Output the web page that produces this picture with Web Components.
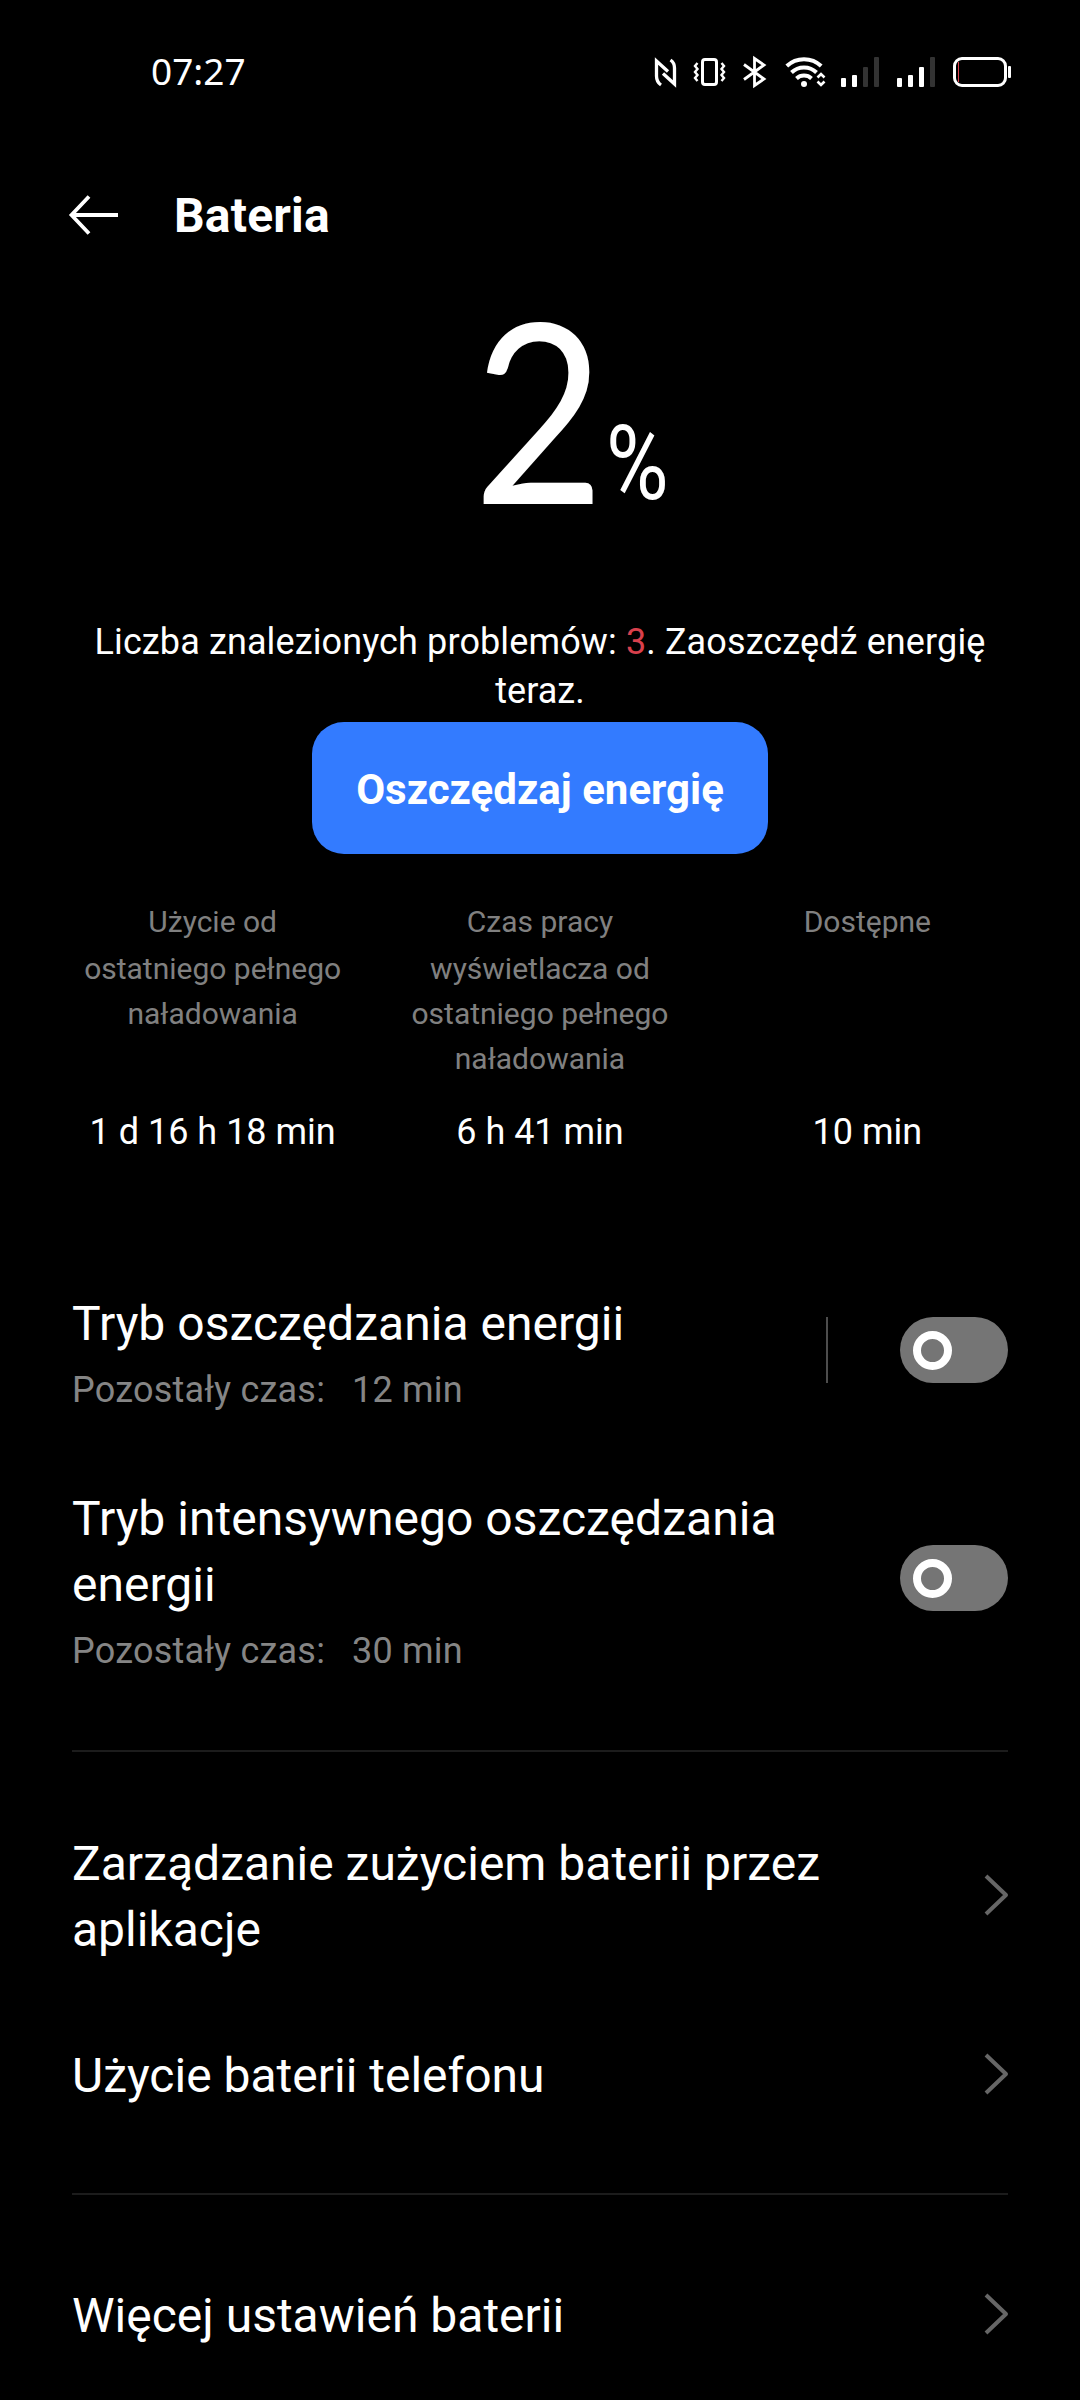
<!DOCTYPE html>
<html lang="pl">
<head>
<meta charset="utf-8">
<title>Bateria</title>
<style>
    body{
        margin: 0;
        background: #000;
        color: #fff;
        font-family: Roboto, "Noto Sans", sans-serif;
    }
</style>
</head>
<body>
<battery-page></battery-page>

<script>
class StatusBar extends HTMLElement{
    constructor(){
        super();
        this.attachShadow({mode:'open'});
    }

    connectedCallback(){
        this.shadowRoot.innerHTML = `
        <style>
            :host{
                display: flex;
                justify-content: space-between;
                height: 144px;
                padding: 0 60px 0 151px;
                box-sizing: border-box;
            }
            .time{
                font: 37px/44px "Noto Sans", sans-serif;
                padding-top: 49px;
            }
            svg{
                display: block;
                margin-top: 40px;
            }
        </style>
        <div class="time"><slot></slot></div>
        <svg width="380" height="64" viewBox="640 40 380 64" fill="none" stroke="#fff" stroke-width="3">
            <!-- nfc -->
            <path stroke-width="3.300" d="M661 85c-3-2-4.500-5-4.500-9V61L668 71.500M670.500 60c3 2 4 4.500 4 8V84L663 73.500"/>
            <!-- vibrate -->
            <rect x="702.500" y="59.500" width="14" height="25" rx="2.500"/>
            <path stroke-width="2.400" d="M697.500 63l-2.500 3 2.500 3-2.500 3 2.500 3-2.500 3 2.500 3M721.500 63l2.500 3-2.500 3 2.500 3-2.500 3 2.500 3-2.500 3"/>
            <!-- bluetooth -->
            <path stroke-width="2.800" d="M744 64.500L764 79l-9.500 6.500V58.500L764 65 744 79.500"/>
            <!-- wifi -->
            <path stroke-width="4" d="M786.800 66a25 25 0 0 1 34.400 0M791.500 72.500a18 18 0 0 1 25 0M796.500 78.500a11 11 0 0 1 15 0"/>
            <circle cx="804" cy="84" r="3" fill="#fff" stroke="none"/>
            <path stroke-width="2.600" d="M817.500 77.500l3.500-3.500 3.500 3.500M817.500 81.500l3.500 3.500 3.500-3.500"/>
            <!-- signal -->
            <g fill="#fff" stroke="none">
                <rect x="841" y="78" width="5" height="9" rx="1"/>
                <rect x="852" y="75" width="5" height="12" rx="1"/>
                <rect x="863" y="67" width="5" height="20" rx="1" fill="#333"/>
                <rect x="874" y="57" width="5" height="30" rx="1" fill="#333"/>
                <rect x="897" y="78" width="5" height="9" rx="1"/>
                <rect x="908" y="75" width="5" height="12" rx="1"/>
                <rect x="919" y="67" width="5" height="20" rx="1"/>
                <rect x="930" y="57" width="5" height="30" rx="1" fill="#333"/>
                <rect x="1008" y="66" width="3" height="12" rx="1"/>
                <rect x="958" y="62" width="1" height="20" fill="#d9404c"/>
            </g>
            <rect x="954.500" y="58.500" width="51" height="27" rx="7.500"/>
        </svg>
        `
    }
}

class PageHeader extends HTMLElement{
    constructor(){
        super();
        this.attachShadow({mode:'open'});
    }

    connectedCallback(){
        this.shadowRoot.innerHTML = `
        <style>
            :host{
                display: flex;
                align-items: center;
                height: 142px;
                padding-left: 67px;
                gap: 55px;
            }
            h1{
                margin: 0;
                padding-top: 2px;
                font-size: 48px;
                line-height: 60px;
                font-weight: 700;
                letter-spacing: .2px;
            }
            svg{
                display: block;
            }
        </style>
        <svg width="52" height="44" viewBox="0 0 52 44" fill="none" stroke="#fff" stroke-width="3.800">
            <path d="M22 3.500L4.500 22 22 40.500M4 22h47"/>
        </svg>
        <h1><slot></slot></h1>
        `
    }
}

class BatteryLevel extends HTMLElement{
    constructor(){
        super();
        this.attachShadow({mode:'open'});
    }

    connectedCallback(){
        this.shadowRoot.innerHTML = `
        <style>
            :host{
                display: flex;
                align-items: flex-start;
                height: 326px;
                padding-left: 473px;
            }
            .number{
                margin-top: -4px;
                font: 250px/250px Lato, sans-serif;
                width: 133px;
                transform: scaleX(.91);
                transform-origin: left;
            }
            .unit{
                padding-top: 118px;
                font-size: 103px;
                line-height: 120px;
                transform: scaleX(.83);
                transform-origin: left;
            }
        </style>
        <div class="number"><slot></slot></div>
        <div class="unit">%</div>
        `
    }
}

class MainButton extends HTMLElement{
    constructor(){
        super();
        this.attachShadow({mode:'open'});
    }

    connectedCallback(){
        this.shadowRoot.innerHTML = `
        <style>
            :host{
                display: block;
            }
            button{
                display: block;
                width: 456px;
                height: 132px;
                margin: 0 auto;
                padding: 3px 0 0;
                border: 0;
                border-radius: 32px;
                background: #337bff;
                color: #fff;
                font: 700 42px/50px Roboto, sans-serif;
                white-space: nowrap;
            }
        </style>
        <button><slot></slot></button>
        `
    }
}

class UsageStat extends HTMLElement{
    constructor(){
        super();
        this.attachShadow({mode:'open'});
    }

    connectedCallback(){
        this.shadowRoot.innerHTML = `
        <style>
            :host{
                display: flex;
                flex-direction: column;
                align-items: center;
                text-align: center;
            }
            .label{
                width: 270px;
                height: 184px;
                color: #808080;
                font-size: 30px;
                line-height: 45px;
            }
            .label::first-line{
                line-height: 49px;
            }
            .value{
                margin-top: 27px;
                font-size: 36px;
                line-height: 49px;
            }
        </style>
        <div class="label">${this.getAttribute('label')}</div>
        <div class="value"><slot></slot></div>
        `
    }
}

class ToggleSwitch extends HTMLElement{
    constructor(){
        super();
        this.attachShadow({mode:'open'});
    }

    connectedCallback(){
        this.shadowRoot.innerHTML = `
        <style>
            :host{
                display: flex;
                align-items: center;
                width: 108px;
                height: 66px;
                padding-left: 13px;
                box-sizing: border-box;
                border-radius: 33px;
                background: #757575;
            }
            .knob{
                width: 39px;
                height: 39px;
                box-sizing: border-box;
                border: 8px solid #fff;
                border-radius: 50%;
            }
        </style>
        <div class="knob"></div>
        `
    }
}

class ModeRow extends HTMLElement{
    constructor(){
        super();
        this.attachShadow({mode:'open'});
    }

    connectedCallback(){
        this.shadowRoot.innerHTML = `
        <style>
            :host{
                display: flex;
                justify-content: space-between;
                align-items: center;
                padding: 0 72px;
            }
            .text{
                width: 740px;
            }
            .title{
                font-size: 48px;
                line-height: 66px;
                letter-spacing: .03px;
            }
            .time{
                display: flex;
                gap: 27px;
                margin-top: 9px;
                color: #858585;
                font-size: 36px;
                line-height: 49px;
                letter-spacing: .2px;
            }
            .action{
                display: flex;
                gap: 72px;
                margin-bottom: 6px;
            }
            .line{
                display: none;
                width: 2px;
                background: #4d4d4d;
            }
            :host([split]) .line{
                display: block;
            }
        </style>
        <div class="text">
            <div class="title"><slot></slot></div>
            <div class="time"><span>Pozostały czas:</span><span>${this.getAttribute('time')}</span></div>
        </div>
        <div class="action">
            <div class="line"></div>
            <toggle-switch></toggle-switch>
        </div>
        `
    }
}

class LinkRow extends HTMLElement{
    constructor(){
        super();
        this.attachShadow({mode:'open'});
    }

    connectedCallback(){
        this.shadowRoot.innerHTML = `
        <style>
            :host{
                display: flex;
                justify-content: space-between;
                align-items: center;
                padding: 0 71px 0 72px;
                font-size: 48px;
                line-height: 66px;
            }
            .title{
                width: 780px;
            }
            svg{
                display: block;
                margin-bottom: 5px;
            }
        </style>
        <div class="title"><slot></slot></div>
        <svg width="26" height="44" viewBox="0 0 26 44" fill="none" stroke="#666" stroke-width="4" stroke-linejoin="round">
            <path d="M3 3L23 22 3 41"/>
        </svg>
        `
    }
}

class BatteryPage extends HTMLElement{
    constructor(){
        super();
        this.attachShadow({mode:'open'});
    }

    connectedCallback(){
        this.shadowRoot.innerHTML = `
        <style>
            :host{
                display: block;
                width: 1080px;
                height: 2400px;
                overflow: hidden;
                background: #000;
            }
            .problems{
                margin: 0 72px;
                padding: 6px 0;
                text-align: center;
                font-size: 36px;
                line-height: 49px;
            }
            .problems .first{
                display: flex;
                justify-content: center;
                white-space: pre;
                letter-spacing: .12px;
            }
            .problems .count{
                color: #d9404c;
            }
            .stats{
                display: grid;
                grid-template-columns: repeat(3, 1fr);
                padding: 43px 49px 0;
            }
            .modes{
                display: flex;
                flex-direction: column;
                gap: 71px;
                padding: 134px 0 74px;
            }
            .links{
                display: flex;
                flex-direction: column;
                gap: 80px;
                padding: 79px 0 84px;
            }
            .links.last{
                padding-top: 88px;
            }
            hr{
                height: 2px;
                margin: 0 72px;
                border: 0;
                background: #1c1c1c;
            }
        </style>
        <status-bar>07:27</status-bar>
        <page-header>Bateria</page-header>
        <battery-level>2</battery-level>
        <div class="problems">
            <div class="first"><span>Liczba znalezionych problemów: </span><span class="count">3</span><span>. Zaoszczędź energię</span></div>
            <div>teraz.</div>
        </div>
        <main-button>Oszczędzaj energię</main-button>
        <div class="stats">
            <usage-stat label="Użycie od ostatniego pełnego naładowania">1 d 16 h 18 min</usage-stat>
            <usage-stat label="Czas pracy wyświetlacza od ostatniego pełnego naładowania">6 h 41 min</usage-stat>
            <usage-stat label="Dostępne">10 min</usage-stat>
        </div>
        <div class="modes">
            <mode-row split time="12 min">Tryb oszczędzania energii</mode-row>
            <mode-row time="30 min">Tryb intensywnego oszczędzania energii</mode-row>
        </div>
        <hr>
        <div class="links">
            <link-row>Zarządzanie zużyciem baterii przez aplikacje</link-row>
            <link-row>Użycie baterii telefonu</link-row>
        </div>
        <hr>
        <div class="links last">
            <link-row>Więcej ustawień baterii</link-row>
        </div>
        `
    }
}

customElements.define('status-bar',StatusBar)
customElements.define('page-header',PageHeader)
customElements.define('battery-level',BatteryLevel)
customElements.define('main-button',MainButton)
customElements.define('usage-stat',UsageStat)
customElements.define('toggle-switch',ToggleSwitch)
customElements.define('mode-row',ModeRow)
customElements.define('link-row',LinkRow)
customElements.define('battery-page',BatteryPage)
</script>
</body>
</html>
